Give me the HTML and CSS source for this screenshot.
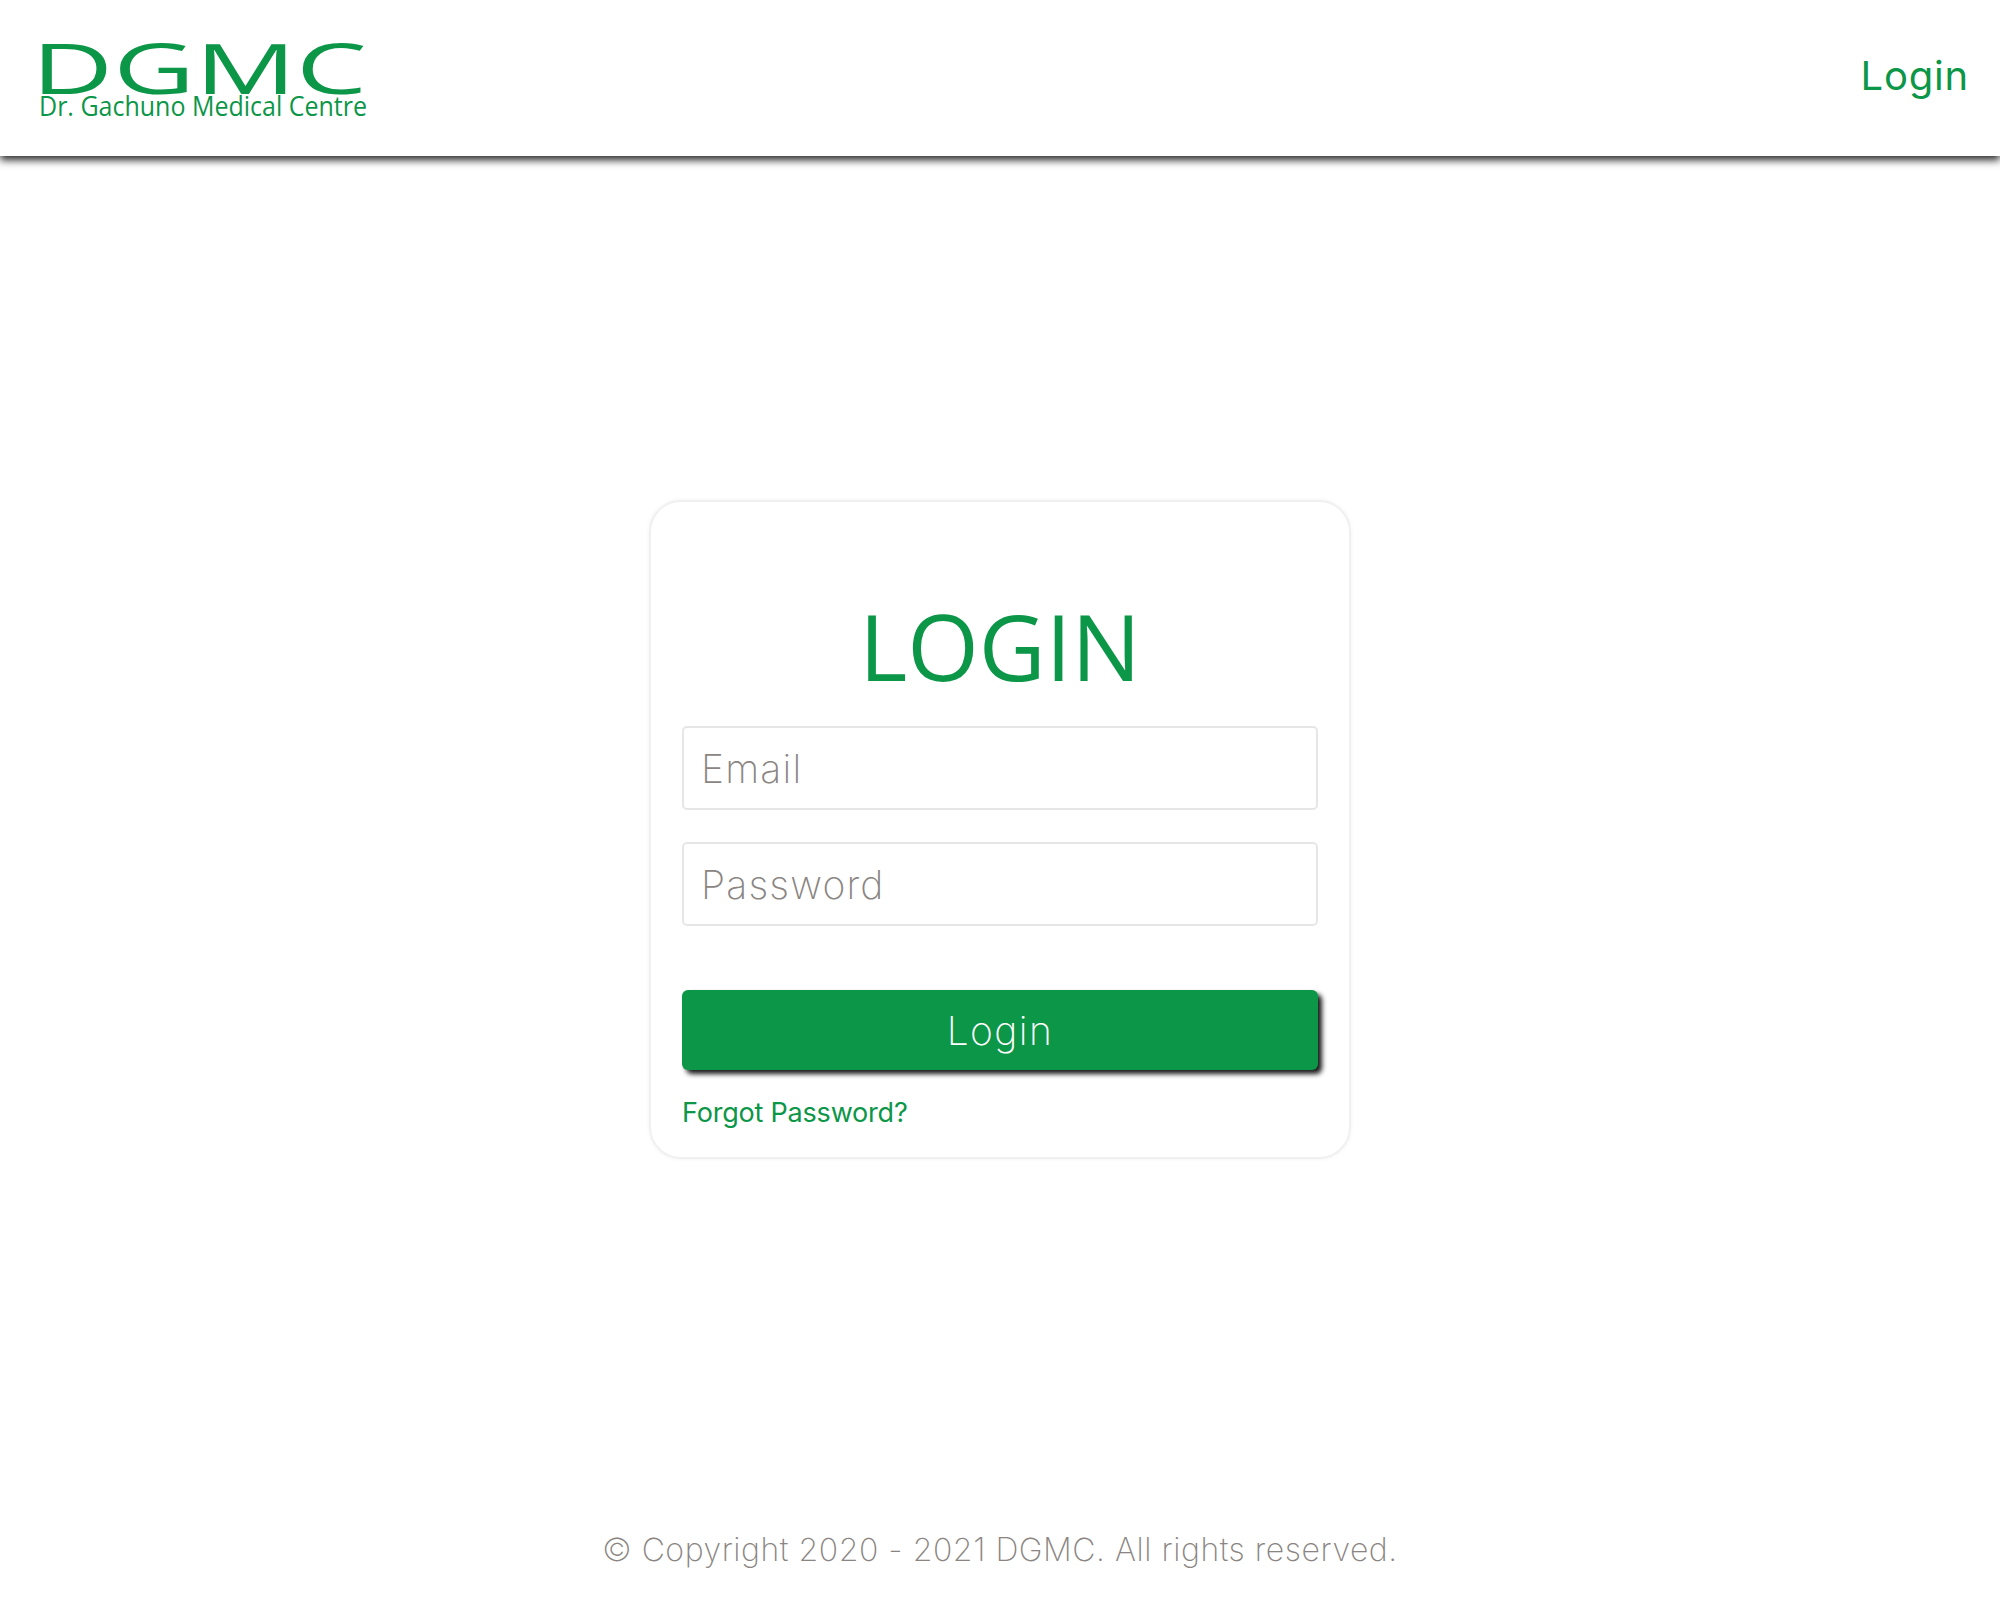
FILE: index.html
```html
<!DOCTYPE html>
<html lang="en">
<head>
  <meta charset="UTF-8" />
  <title>DGMC - Login</title>
  <link rel="stylesheet" href="styles.css">
</head>
<body>
  <header class="topbar">
    <a href="#" class="logo" aria-label="DGMC">
      <svg class="logo-svg" viewBox="0 0 330 76" width="330" height="76">
        <text class="logo-big" x="-7.5" y="52" textLength="335.5" lengthAdjust="spacingAndGlyphs">DGMC</text>
        <text class="logo-small" x="0" y="74" textLength="328" lengthAdjust="spacingAndGlyphs">Dr. Gachuno Medical Centre</text>
      </svg>
    </a>
    <a href="#" class="nav-link">Login</a>
  </header>

  <main class="content">
    <form class="login-card">
      <h1>LOGIN</h1>
      <input type="text" placeholder="Email">
      <input type="password" placeholder="Password">
      <button type="button" class="login-btn">Login</button>
      <a href="#" class="forgot">Forgot Password?</a>
    </form>
  </main>

  <footer class="page-footer">© Copyright 2020 - 2021 DGMC. All rights reserved.</footer>
</body>
</html>
```

FILE: styles.css
```css
*{margin:0;padding:0;box-sizing:border-box}
html,body{height:100%}
body{
  font-family:'Inter','Liberation Sans',sans-serif;
  background:#fff;
  display:flex;
  flex-direction:column;
  height:1600px;
  overflow:hidden;
}
a{text-decoration:none;color:#0c9648}

.topbar{
  height:156px;
  flex:none;
  display:flex;
  justify-content:space-between;
  align-items:center;
  padding:0 31px 0 39px;
  background:#fff;
  box-shadow:0 4px 8px rgba(0,0,0,.85);
}
.logo{display:block;height:76px;margin-top:3px}
.logo-svg{display:block;overflow:visible}
.logo-big{font-family:'Open Sans',sans-serif;font-size:70px;font-weight:500;fill:#0c9648}
.logo-small{font-family:'Open Sans',sans-serif;font-size:28px;fill:#0c9648}
.nav-link{font-size:40px;font-weight:400;letter-spacing:.8px;margin-bottom:6px}

.content{flex:1;display:flex;justify-content:center;align-items:center;padding-bottom:2px}
.login-card{
  width:702px;
  height:659px;
  display:flex;
  flex-direction:column;
  padding:0 31px;
  border:2px solid #f0f0f0;
  border-radius:32px;
  box-shadow:0 0 4px rgba(0,0,0,.06);
}
.login-card h1{
  font-family:'Open Sans',sans-serif;
  font-size:92px;
  font-weight:400;
  line-height:110px;
  text-align:center;
  color:#0c9648;
  margin:89px 0 25px;
}
.login-card input{
  height:84px;
  width:100%;
  padding:0 17px;
  border:2px solid #e6e6e6;
  border-radius:5px;
  font-family:inherit;
  font-size:39px;
  font-weight:250;
  letter-spacing:1.2px;
  margin-bottom:32px;
  outline:none;
}
.login-card input::placeholder{color:#8a8582;opacity:1}
.login-btn{
  height:80px;
  margin-top:32px;
  background:#0c9648;
  color:#fff;
  border:none;
  border-radius:6px;
  font-family:inherit;
  font-size:39px;
  font-weight:250;
  letter-spacing:1.4px;
  box-shadow:4px 4px 5px rgba(0,0,0,.9);
}
.forgot{font-size:27px;margin-top:25px;letter-spacing:-.2px;line-height:36px}

.page-footer{
  flex:none;
  height:95px;
  text-align:center;
  font-size:32px;
  font-weight:250;
  color:#8a8582;
  line-height:90px;
  letter-spacing:.54px;
}
```
